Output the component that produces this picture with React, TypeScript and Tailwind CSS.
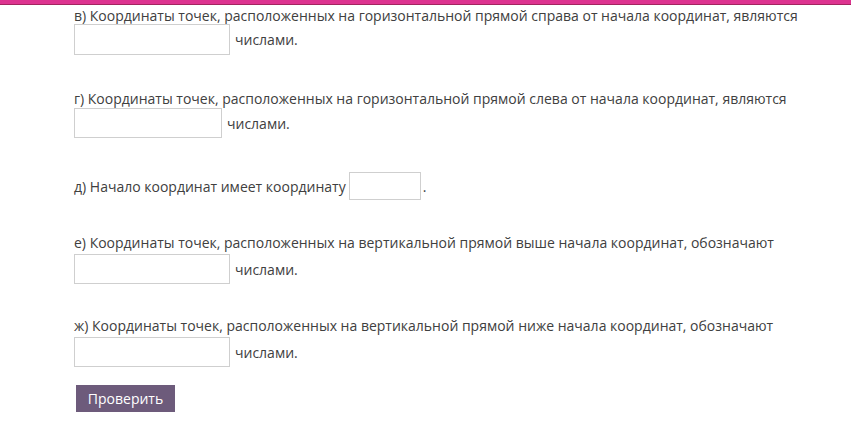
import React from 'react';

function Field({ w, h }: { w: string; h: string }) {
  return <input type="text" className={`${w} ${h} border border-[#cfcfcf] bg-white outline-none`} />;
}

export default function App() {
  return (
    <div className="min-h-screen bg-white text-[14px] text-[#404040]" style={{ fontFamily: '"Open Sans", "Noto Sans", sans-serif' }}>
      <div className="h-[5px] bg-[#dd3390] border-b border-[#a3245f]" />

      <div className="pl-[74px] pt-[3px]">
        {/* в */}
        <p className="leading-[16px]">
          в) Координаты точек, расположенных на горизонтальной прямой справа от начала координат, являются
        </p>
        <div className="flex items-center gap-[5px]">
          <Field w="w-[156px]" h="h-[31px]" />
          <span>числами.</span>
        </div>

        {/* г */}
        <p className="mt-[36px] leading-[16px]">
          г) Координаты точек, расположенных на горизонтальной прямой слева от начала координат, являются
        </p>
        <div className="mt-[1px] flex items-center gap-[5px]">
          <Field w="w-[148px]" h="h-[30px]" />
          <span>числами.</span>
        </div>

        {/* д */}
        <div className="mt-[34px] flex items-center">
          <span>д) Начало координат имеет координату</span>
          <span className="ml-[3px] flex"><Field w="w-[72px]" h="h-[28px]" /></span>
          <span className="ml-[2px]">.</span>
        </div>

        {/* е */}
        <p className="mt-[35px] leading-[16px]">
          е) Координаты точек, расположенных на вертикальной прямой выше начала координат, обозначают
        </p>
        <div className="mt-[3px] flex items-center gap-[5px]">
          <Field w="w-[156px]" h="h-[30px]" />
          <span>числами.</span>
        </div>

        {/* ж */}
        <p className="mt-[34px] leading-[16px]">
          ж) Координаты точек, расположенных на вертикальной прямой ниже начала координат, обозначают
        </p>
        <div className="mt-[3px] flex items-center gap-[5px]">
          <Field w="w-[156px]" h="h-[30px]" />
          <span>числами.</span>
        </div>

        <button className="mt-[18px] ml-[2px] h-[27px] w-[99px] bg-[#6d5b7b] text-[14px] text-white">
          Проверить
        </button>
      </div>
    </div>
  );
}
